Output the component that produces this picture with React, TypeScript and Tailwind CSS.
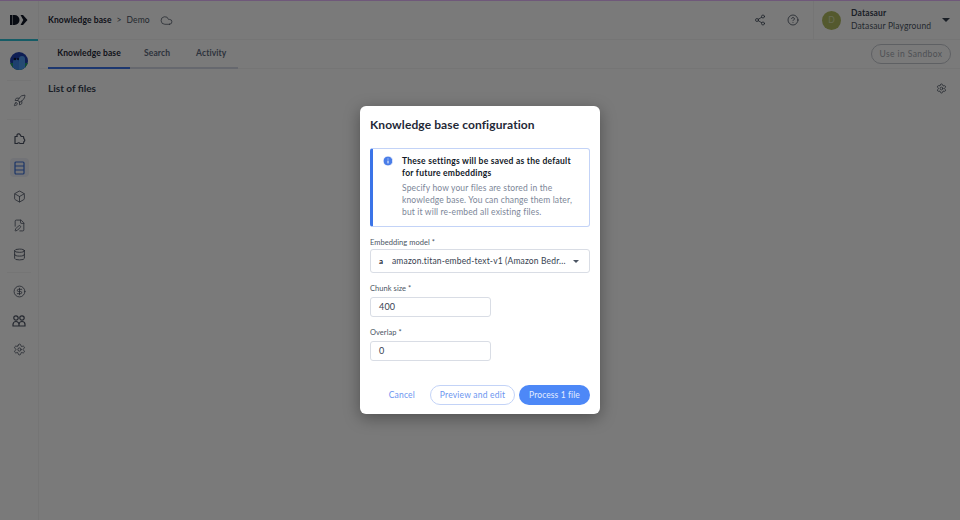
import React from "react";
import { Share2, CircleHelp, Settings, Rocket, Box, FilePen, Database, CircleDollarSign, Cloud, Info } from "lucide-react";

function SideIcon({ children, active }: { children: React.ReactNode; active?: boolean }) {
  return (
    <div className={`flex h-[19px] w-[19px] items-center justify-center rounded-sm ${active ? "bg-[#eef1f8] text-[#3b6fd8]" : "text-[#4b5262]"}`}>
      {children}
    </div>
  );
}

function Field({ label, value }: { label: string; value: string }) {
  return (
    <div className="flex flex-col">
      <label className="mb-[2px] h-[12px] text-[7.5px] leading-[12px] tracking-[0.05px] text-[#4b5563]">{label}</label>
      <div className="flex h-[20px] w-[121px] items-center rounded-[3px] border border-[#d9dde5] px-[8px] text-[9px] tracking-[0.2px] text-[#374151]">{value}</div>
    </div>
  );
}

export default function App() {
  return (
    <div className="relative flex h-[520px] w-[960px] flex-col overflow-hidden bg-white font-['Lato',sans-serif]">
      <div className="h-[1px] bg-[#e8b8ff]" />
      <div className="flex min-h-0 flex-1">
        <aside className="flex w-[39px] flex-col items-center border-r border-[#f4f4f4]">
          <div className="flex h-[40px] w-full items-center justify-center border-b-[2px] border-[#2fc0d6]">
            <svg width="18" height="10" viewBox="0 0 18 10" fill="#111827">
              <path d="M0 0h2.5v10H0zM3 0h1.5a5 5 0 0 1 0 10H3z" />
              <path d="M10.5 0h2.5l4.5 5-4.5 5h-2.5l2.8-5z" />
            </svg>
          </div>
          <div className="mt-[11px]">
            <svg width="18" height="18" viewBox="0 0 18 18">
              <defs><clipPath id="av"><circle cx="9" cy="9" r="9" /></clipPath></defs>
              <g clipPath="url(#av)">
                <rect width="18" height="18" fill="#1f3fb0" />
                <rect y="11" width="18" height="7" fill="#1f9e6a" />
                <path d="M3 18v-8a3 3 0 0 1 6 0v8z" fill="#3f86e8" />
                <path d="M9 18V7a3 3 0 0 1 6 0v11z" fill="#4f9cf0" />
                <circle cx="5" cy="7" r="1.3" fill="#0b1530" />
                <circle cx="8" cy="7" r="1" fill="#0b1530" />
              </g>
            </svg>
          </div>
          <div className="mt-[10px] h-px w-[24px] bg-[#f4f4f4]" />
          <div className="mt-[10px]"><SideIcon><Rocket size={13} strokeWidth={1.5} /></SideIcon></div>
          <div className="mt-[9px] h-px w-[24px] bg-[#f4f4f4]" />
          <div className="mt-[9px] flex flex-col items-center gap-[10px]">
            <SideIcon>
              <svg width="13" height="13" viewBox="0 0 13 13" fill="none" stroke="currentColor" strokeWidth="1.2" strokeLinejoin="round">
                <path d="M2 11.5V4.5h2.2a1.6 1.6 0 0 1 3-1.8l1 1.8h2.3l.4 2.3a1.5 1.5 0 0 1 0 2.7l-.4 2H7a1.5 1.5 0 0 0-2.6 0z" />
              </svg>
            </SideIcon>
            <SideIcon active>
              <svg width="11" height="14" viewBox="0 0 11 14" fill="none" stroke="currentColor" strokeWidth="1.2">
                <rect x="1" y="1" width="9" height="12" rx="1" />
                <path d="M1 5h9M1 9h9" />
              </svg>
            </SideIcon>
            <SideIcon><Box size={13} strokeWidth={1.5} /></SideIcon>
            <SideIcon><FilePen size={13} strokeWidth={1.5} /></SideIcon>
            <SideIcon><Database size={13} strokeWidth={1.6} /></SideIcon>
          </div>
          <div className="mt-[8px] h-px w-[24px] bg-[#f4f4f4]" />
          <div className="mt-[9px] flex flex-col items-center gap-[10px]">
            <SideIcon><CircleDollarSign size={13} strokeWidth={1.5} /></SideIcon>
            <SideIcon>
              <svg width="14" height="12" viewBox="0 0 14 12" fill="none" stroke="currentColor" strokeWidth="1.2">
                <circle cx="4" cy="3" r="2.2" />
                <circle cx="10" cy="3" r="2.2" />
                <path d="M1 11V9.5a3 3 0 0 1 6 0V11zM7 11V9.5a3 3 0 0 1 6 0V11z" />
              </svg>
            </SideIcon>
            <SideIcon><Settings size={13} strokeWidth={1.5} /></SideIcon>
          </div>
        </aside>
        <main className="flex min-w-0 flex-1 flex-col">
          <header className="flex h-[39px] items-center border-b border-[#f4f4f4] pl-[9px]">
            <div className="flex items-center text-[8.5px] tracking-[0.1px] text-[#1f2937]">
              <span className="font-bold">Knowledge base</span>
              <span className="mx-[5px] text-[#4b5563]">&gt;</span>
              <span className="text-[#4b5563]">Demo</span>
            </div>
            <Cloud size={13} strokeWidth={1.4} className="ml-[10px] text-[#4b5563]" />
            <div className="flex-1" />
            <Share2 size={12} strokeWidth={1.5} className="text-[#374151]" />
            <CircleHelp size={12} strokeWidth={1.5} className="ml-[21px] text-[#374151]" />
            <div className="ml-[14px] flex h-full w-[147px] shrink-0 items-center border-l border-[#f4f4f4] pl-[8px]">
              <div className="flex h-[19px] w-[19px] shrink-0 items-center justify-center rounded-full bg-[#b0bb60] text-[8.5px] text-[#d8e0b0]">D</div>
              <div className="ml-[10px] flex w-[80px] shrink-0 flex-col whitespace-nowrap text-[8.5px] leading-[13px] tracking-[0.15px]">
                <span className="font-bold text-[#374151]">Datasaur</span>
                <span className="text-[#4b5563]">Datasaur Playground</span>
              </div>
              <div className="ml-[11px] h-0 w-0 border-x-[4px] border-t-[4px] border-x-transparent border-t-[#374151]" />
            </div>
          </header>
          <div className="flex h-[29px] items-start justify-between border-b border-[#f4f4f4] pl-[9px] pr-[9px]">
            <div className="flex h-[29px] w-[190px] border-b-[2px] border-[#d5dae6] text-[8.5px] tracking-[0.1px]">
              <div className="-mb-[2px] flex h-[29px] w-[82px] shrink-0 items-center justify-center whitespace-nowrap border-b-[2px] border-[#3b74e8] font-bold text-[#1f2937]">Knowledge base</div>
              <div className="ml-[14px] flex items-center font-bold text-[#5f6b80]">Search</div>
              <div className="ml-[26px] flex items-center font-bold text-[#5f6b80]">Activity</div>
            </div>
            <div className="mt-[4px] flex h-[20px] w-[80px] items-center justify-center rounded-full border border-[#c5c9d0] text-[8.5px] tracking-[0.4px] text-[#a3a8b0]">Use in Sandbox</div>
          </div>
          <div className="flex items-center justify-between pl-[9px] pr-[13px] pt-[12px]">
            <span className="text-[10px] font-bold text-[#374151]">List of files</span>
            <Settings size={11} strokeWidth={1.5} className="text-[#374151]" />
          </div>
        </main>
      </div>

      <div className="absolute inset-0 flex items-center justify-center bg-black/[.52]">
        <div className="flex h-[308px] w-[240px] flex-col rounded-[6px] bg-white px-[10px] shadow-[0_4px_16px_rgba(0,0,0,0.35)]">
          <h2 className="mt-[10px] h-[18px] text-[12px] font-bold leading-[18px] tracking-[0.1px] text-[#1f2937]">Knowledge base configuration</h2>
          <div className="mt-[14px] flex h-[79px] shrink-0 rounded-[3px] border border-[#c3d3f7] border-l-[3px] border-l-[#3b74e8] pl-[9px] pr-[6px] pt-[6px]">
            <Info size={12} fill="#4a7de8" stroke="white" strokeWidth={2} className="shrink-0" />
            <div className="ml-[8px] flex flex-col">
              <p className="text-[8.5px] font-bold leading-[12px] tracking-[0.25px] text-[#111827]">These settings will be saved as the default<br />for future embeddings</p>
              <p className="mt-[3px] text-[8.5px] leading-[12px] tracking-[0.15px] text-[#7c8698]">Specify how your files are stored in the<br />knowledge base. You can change them later,<br />but it will re-embed all existing files.</p>
            </div>
          </div>
          <label className="mt-[10px] h-[12px] text-[7.5px] leading-[12px] tracking-[0.05px] text-[#4b5563]">Embedding model *</label>
          <div className="flex h-[24px] shrink-0 items-center rounded-[3px] border border-[#d9dde5] pl-[8px] pr-[10px]">
            <span className="w-[13px] shrink-0 text-[8px] font-bold text-[#1f2937]">a</span>
            <span className="min-w-0 flex-1 overflow-visible whitespace-nowrap text-[8.5px] tracking-[0.15px] text-[#374151]">amazon.titan-embed-text-v1 (Amazon Bedr...</span>
            <div className="ml-[4px] h-0 w-0 shrink-0 border-x-[3px] border-t-[3px] border-x-transparent border-t-[#4b5563]" />
          </div>
          <div className="mt-[10px]"><Field label="Chunk size *" value="400" /></div>
          <div className="mt-[10px]"><Field label="Overlap *" value="0" /></div>
          <div className="mt-[24px] flex items-center justify-end">
            <span className="mr-[15px] text-[8.5px] tracking-[0.2px] text-[#6b95f0]">Cancel</span>
            <div className="flex h-[20px] w-[85px] items-center justify-center rounded-full border border-[#c3d3f7] text-[8.5px] tracking-[0.2px] text-[#6b95f0]">Preview and edit</div>
            <div className="ml-[4px] flex h-[20px] w-[71px] items-center justify-center rounded-full bg-[#4d88f7] text-[8.5px] tracking-[0.1px] text-[#e4edff]">Process 1 file</div>
          </div>
        </div>
      </div>
    </div>
  );
}
